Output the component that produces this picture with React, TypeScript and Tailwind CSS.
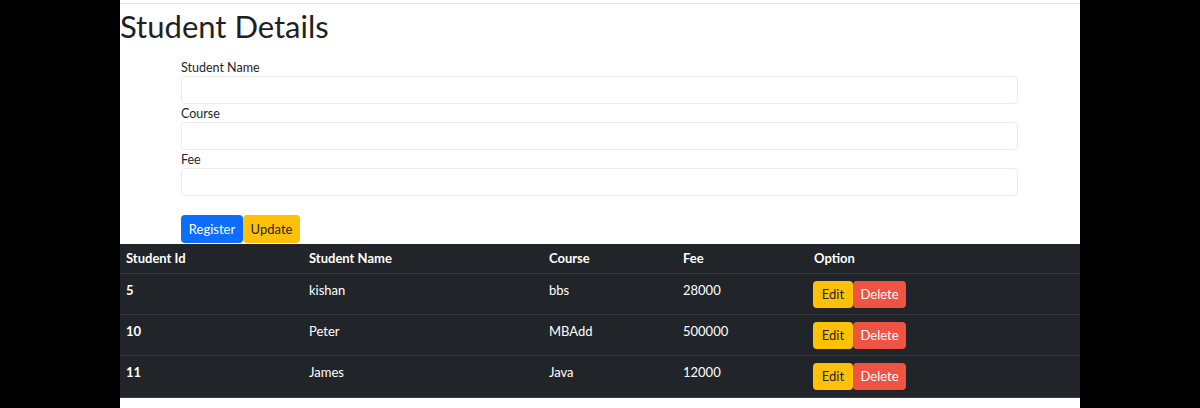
import React from "react";

const rows = [
  { id: "5", name: "kishan", course: "bbs", fee: "28000" },
  { id: "10", name: "Peter", course: "MBAdd", fee: "500000" },
  { id: "11", name: "James", course: "Java", fee: "12000" },
];

function Field({ label }: { label: string }) {
  return (
    <div className="flex flex-col">
      <label className="h-[18px] text-[12.5px] leading-[19px] text-[#212529]">{label}</label>
      <input className="h-[28px] w-full rounded-[4px] border border-[#ececec] bg-white outline-none" />
    </div>
  );
}

export default function App() {
  return (
    <div
      className="flex h-[408px] w-full justify-center overflow-hidden bg-black"
      style={{ fontFamily: 'Lato, "Open Sans", sans-serif' }}
    >
      <div className="flex w-[960px] flex-col bg-white">
        <div className="mt-[3px] border-t border-[#e3e3e3]" />
        <h1 className="h-[54px] pt-[2px] text-[31px] leading-[40px] text-[#1e2124]">Student Details</h1>
        <form className="flex flex-col pl-[61px] pr-[62px]">
          <Field label="Student Name" />
          <Field label="Course" />
          <Field label="Fee" />
          <div className="mt-[19px] flex">
            <button type="button" className="h-[28px] w-[62px] rounded-[4px] bg-[#0d6efd] pt-[1px] text-[13px] text-white">
              Register
            </button>
            <button type="button" className="h-[28px] w-[57px] rounded-[4px] bg-[#ffc107] pt-[1px] text-[13px] text-[#212529]">
              Update
            </button>
          </div>
        </form>
        <div className="mt-[1px] bg-[#212529] text-[13px] text-white">
          <div className="grid h-[30px] grid-cols-[183px_240px_134px_131px_1fr] items-center border-b border-[#373b3e] pt-[1px] font-bold">
            <div className="pl-[6px]">Student Id</div>
            <div className="pl-[6px]">Student Name</div>
            <div className="pl-[6px]">Course</div>
            <div className="pl-[6px]">Fee</div>
            <div className="pl-[6px]">Option</div>
          </div>
          {rows.map((r, i) => (
            <div
              key={r.id}
              className={`grid h-[41px] grid-cols-[183px_240px_134px_131px_1fr] items-start pt-[7px] ${
                i < rows.length - 1 ? "border-b border-[#373b3e]" : ""
              }`}
            >
              <div className="pl-[6px] font-bold leading-[19px]">{r.id}</div>
              <div className="pl-[6px] leading-[19px]">{r.name}</div>
              <div className="pl-[6px] leading-[19px]">{r.course}</div>
              <div className="pl-[6px] leading-[19px]">{r.fee}</div>
              <div className="flex pl-[5px]">
                <button type="button" className="h-[27px] w-[40px] rounded-[4px] bg-[#ffc107] pt-[1px] text-[13px] text-[#212529]">
                  Edit
                </button>
                <button type="button" className="h-[27px] w-[53px] rounded-[4px] bg-[#ef5442] pt-[1px] text-[13px] text-white">
                  Delete
                </button>
              </div>
            </div>
          ))}
          <div className="h-[1px] bg-[#3a3f44]" />
        </div>
        <div className="flex-1 bg-white" />
      </div>
    </div>
  );
}
